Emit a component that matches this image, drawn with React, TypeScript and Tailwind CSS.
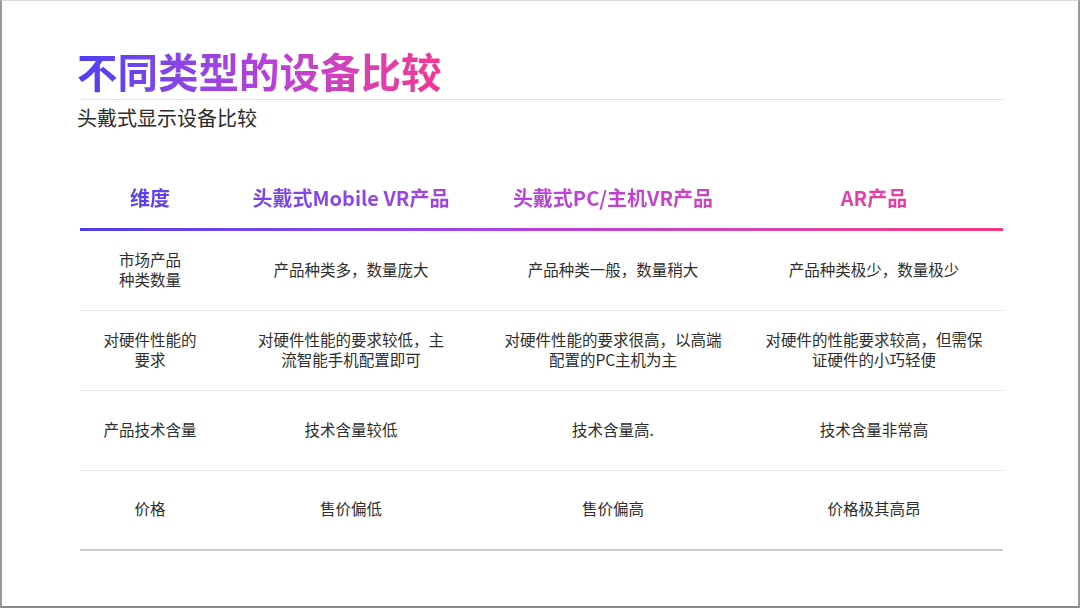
import React from 'react';

const rows: string[][][] = [
  [['市场产品', '种类数量'], ['产品种类多，数量庞大'], ['产品种类一般，数量稍大'], ['产品种类极少，数量极少']],
  [['对硬件性能的', '要求'], ['对硬件性能的要求较低，主', '流智能手机配置即可'], ['对硬件性能的要求很高，以高端', '配置的PC主机为主'], ['对硬件的性能要求较高，但需保', '证硬件的小巧轻便']],
  [['产品技术含量'], ['技术含量较低'], ['技术含量高.'], ['技术含量非常高']],
  [['价格'], ['售价偏低'], ['售价偏高'], ['价格极其高昂']],
];

const headers = ['维度', '头戴式Mobile VR产品', '头戴式PC/主机VR产品', 'AR产品'];

const App: React.FC = () => {
  return (
    <div
      className="w-[1080px] h-[608px] bg-white border-l-2 border-r-2 border-b-2 border-t border-l-[#9a9a9a] border-r-[#9a9a9a] border-b-[#8a8a8a] border-t-[#d8d8d8] overflow-hidden"
      style={{ fontFamily: '"Noto Sans CJK SC", "Noto Sans", sans-serif' }}
    >
      <div className="ml-[75px] w-[926px] pt-[45px]">
        <h1 className="inline-block text-[40.5px] leading-[50px] font-bold bg-gradient-to-r from-[#4a3ff2] via-[#b43fdc] to-[#f5348f] bg-clip-text text-transparent">
          不同类型的设备比较
        </h1>
        <div className="mt-[3px] ml-[4px] h-px bg-[#e2e2e2]" />
        <p className="mt-[8px] text-[20px] leading-[20px] text-[#2b2b2b]">头戴式显示设备比较</p>

        <div className="mt-[40px] ml-[3px]">
          <div className="grid grid-cols-[140px_262px_262px_260px] h-[60px] items-center text-[20px] font-bold bg-gradient-to-r from-[#4b3ef0] via-[#b840dc] to-[#f5358e] bg-clip-text text-transparent">
            {headers.map((h) => (
              <div key={h} className="text-center">{h}</div>
            ))}
          </div>
          <div className="h-[3px] bg-gradient-to-r from-[#4b3ef0] via-[#b840dc] to-[#f5357f]" />
          {rows.map((row, i) => (
            <div
              key={i}
              className={`grid grid-cols-[140px_262px_262px_260px] h-[80px] pb-[4px] items-center text-[15.5px] leading-[20px] text-[#2e2e2e] ${
                i === rows.length - 1 ? 'border-b-2 border-[#c9c9c9]' : 'border-b border-[#e4e4e4]'
              }`}
            >
              {row.map((cell, j) => (
                <div key={j} className="text-center">
                  {cell.map((line, k) => (
                    <div key={k}>{line}</div>
                  ))}
                </div>
              ))}
            </div>
          ))}
        </div>
      </div>
    </div>
  );
};

export default App;
